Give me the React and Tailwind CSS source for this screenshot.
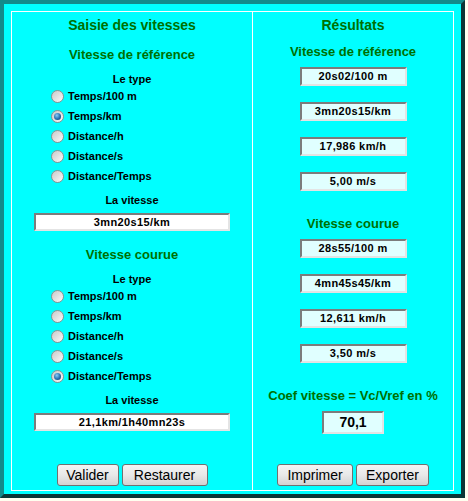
const FONT = { fontFamily: "'Liberation Sans', Arial, sans-serif" }

const TYPES = ['Temps/100 m', 'Temps/km', 'Distance/h', 'Distance/s', 'Distance/Temps']

const REF_OUT = ['20s02/100 m', '3mn20s15/km', '17,986 km/h', '5,00 m/s']
const RUN_OUT = ['28s55/100 m', '4mn45s45/km', '12,611 km/h', '3,50 m/s']

function Radio({ checked }) {
  return (
    <span className="w-[13px] h-[13px] rounded-full border border-[#8e8f8f] bg-linear-to-br from-[#c9c9c9] to-[#fbfbfb] flex items-center justify-center shrink-0">
      {checked && <span className="w-[7px] h-[7px] rounded-full bg-radial-[at_40%_35%] from-[#8ccdf7] via-[#2d78b8] to-[#0b2f5c]" />}
    </span>
  )
}

function TypeGroup({ selected }) {
  return (
    <div className="pl-[39px]">
      {TYPES.map((t, i) => (
        <div key={t} className="h-[20px] flex items-center gap-[4px]">
          <Radio checked={i === selected} />
          <span className="text-[11px] font-bold text-black leading-none">{t}</span>
        </div>
      ))}
    </div>
  )
}

function Button({ w, children }) {
  return (
    <div className={`${w} h-[22px] rounded-[3px] border border-[#707070] bg-linear-to-b from-[#f4f4f4] via-[#e8e8e8] to-[#d2d2d2] flex items-center justify-center text-[14px] text-black`}>
      {children}
    </div>
  )
}

function OutBox({ value, className = 'mt-[16px]' }) {
  return (
    <div className={`${className} mx-auto w-[107px] h-[19px] bg-[#e0ffff] border-2 border-t-[#7c7c7c] border-l-[#7c7c7c] border-b-[#e4e4e4] border-r-[#e4e4e4] flex items-center justify-center text-[11px] font-bold tracking-[0.4px] text-black`}>
      {value}
    </div>
  )
}

export default function App() {
  return (
    <div className="w-[468px] h-[501px] bg-[#fffff0]" style={FONT}>
      <div className="w-[465px] h-[498px] bg-[#00ffff] border-4 border-t-[#138a8a] border-l-[#138a8a] border-b-[#0c3636] border-r-[#0c3636] p-[7px]">
        <div className="flex h-[480px]">
          {/* Saisie */}
          <div className="w-[242px] border border-white flex flex-col text-center">
            <div className="mt-[1px] h-[24px] leading-[24px] text-[14px] font-bold text-[#007000]">Saisie des vitesses</div>
            <div className="mt-[8px] h-[20px] leading-[20px] text-[13px] font-bold text-[#007000]">Vitesse de référence</div>
            <div className="mt-[7px] h-[14px] leading-[14px] text-[11px] font-bold">Le type</div>
            <div className="text-left">
              <TypeGroup selected={1} />
            </div>
            <div className="mt-[7px] h-[14px] leading-[14px] text-[11px] font-bold">La vitesse</div>
            <div className="mt-[6px] mx-auto w-[196px] h-[18px] bg-white border-2 border-t-[#7c7c7c] border-l-[#7c7c7c] border-b-[#e4e4e4] border-r-[#e4e4e4] flex items-center justify-center text-[11px] font-bold tracking-[0.4px]">
              3mn20s15/km
            </div>

            <div className="mt-[14px] h-[20px] leading-[20px] text-[13px] font-bold text-[#007000]">Vitesse courue</div>
            <div className="mt-[7px] h-[14px] leading-[14px] text-[11px] font-bold">Le type</div>
            <div className="text-left">
              <TypeGroup selected={4} />
            </div>
            <div className="mt-[7px] h-[14px] leading-[14px] text-[11px] font-bold">La vitesse</div>
            <div className="mt-[6px] mx-auto w-[196px] h-[18px] bg-white border-2 border-t-[#7c7c7c] border-l-[#7c7c7c] border-b-[#e4e4e4] border-r-[#e4e4e4] flex items-center justify-center text-[11px] font-bold tracking-[0.4px]">
              21,1km/1h40mn23s
            </div>

            <div className="mt-[33px] flex justify-center gap-[3px]">
              <Button w="w-[62px]">Valider</Button>
              <Button w="w-[86px]">Restaurer</Button>
            </div>
          </div>

          {/* Résultats */}
          <div className="flex-1 border border-l-0 border-white flex flex-col text-center">
            <div className="mt-[1px] h-[24px] leading-[24px] text-[14px] font-bold text-[#007000]">Résultats</div>
            <div className="mt-[5px] h-[20px] leading-[20px] text-[13px] font-bold text-[#007000]">Vitesse de référence</div>
            {REF_OUT.map((v, i) => (
              <OutBox key={v} value={v} className={i === 0 ? 'mt-[5px]' : 'mt-[16px]'} />
            ))}
            <div className="mt-[23px] h-[20px] leading-[20px] text-[13px] font-bold text-[#007000]">Vitesse courue</div>
            {RUN_OUT.map((v, i) => (
              <OutBox key={v} value={v} className={i === 0 ? 'mt-[5px]' : 'mt-[16px]'} />
            ))}
            <div className="mt-[23px] h-[20px] leading-[20px] text-[13px] font-bold text-[#007000]">Coef vitesse = Vc/Vref en %</div>
            <div className="mt-[5px] mx-auto w-[62px] h-[23px] bg-[#e0ffff] border-2 border-t-[#7c7c7c] border-l-[#7c7c7c] border-b-[#e4e4e4] border-r-[#e4e4e4] flex items-center justify-center text-[14px] font-bold">
              70,1
            </div>
            <div className="mt-[30px] flex justify-center gap-[3px]">
              <Button w="w-[76px]">Imprimer</Button>
              <Button w="w-[73px]">Exporter</Button>
            </div>
          </div>
        </div>
      </div>
    </div>
  )
}
